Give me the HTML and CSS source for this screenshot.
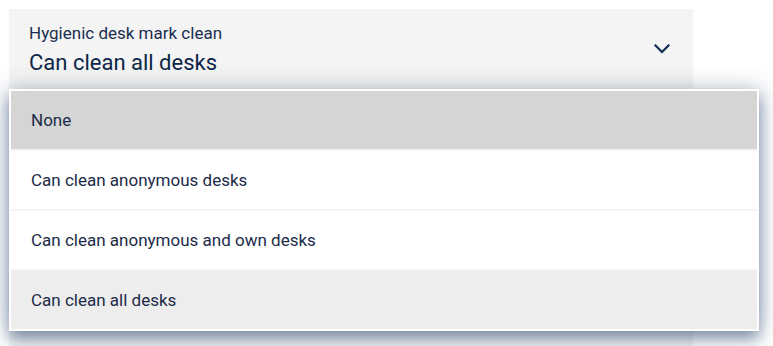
FILE: index.html
```html
<!DOCTYPE html>
<html lang="en">
<head>
  <meta charset="UTF-8">
  <title>Hygienic desk mark clean</title>
  <link rel="stylesheet" href="styles.css">
</head>
<body>

  <div class="field">
    <div class="field-head">
      <div class="field-text">
        <div class="field-label">Hygienic desk mark clean</div>
        <div class="field-value">Can clean all desks</div>
      </div>
      <svg class="chevron" width="16" height="10" viewBox="0 0 16 10">
        <polyline points="1.5,1.5 8,8 14.5,1.5" fill="none" stroke="#0c2d52" stroke-width="2.2" stroke-linecap="square"/>
      </svg>
    </div>

    <ul class="menu">
      <li class="option hover">None</li>
      <li class="option">Can clean anonymous desks</li>
      <li class="option">Can clean anonymous and own desks</li>
      <li class="option selected">Can clean all desks</li>
    </ul>
  </div>

</body>
</html>
```
FILE: styles.css
```css
body {
  margin: 0;
  background-color: #ffffff;
  color: #12284a;
  font-family: Roboto, "Liberation Sans", sans-serif;
  overflow: hidden;
}
.field {
  position: relative;
  margin: 9px 0 0 9px;
  width: 684px;
  height: 337px;
  background-color: #f4f4f4;
}
.field-head {
  display: flex;
  align-items: center;
  justify-content: space-between;
  padding: 13px 23px 0 20px;
}
.field-label {
  font-size: 17px;
  line-height: 22px;
  color: #1a2e4e;
}
.field-value {
  margin-top: 4px;
  font-size: 22px;
  line-height: 30px;
  color: #0d2648;
}
.chevron {
  margin-top: -2px;
}
.menu {
  position: absolute;
  top: 80px;
  left: 0;
  width: 746px;
  margin: 0;
  padding: 0;
  list-style: none;
  background-color: #ffffff;
  border: 2px solid #ffffff;
  box-shadow: 0 8px 14px rgba(40, 70, 110, 0.5), 0 0 22px rgba(40, 70, 110, 0.3);
}
.option {
  height: 58px;
  display: flex;
  align-items: center;
  padding-left: 20px;
  font-size: 17px;
  color: #1b2b48;
  border-top: 2px solid #f3f3f3;
}
.option:first-child {
  border-top: none;
}
.option.hover {
  background-color: #d5d5d5;
}
.option.selected {
  background-color: #ededed;
}
```
